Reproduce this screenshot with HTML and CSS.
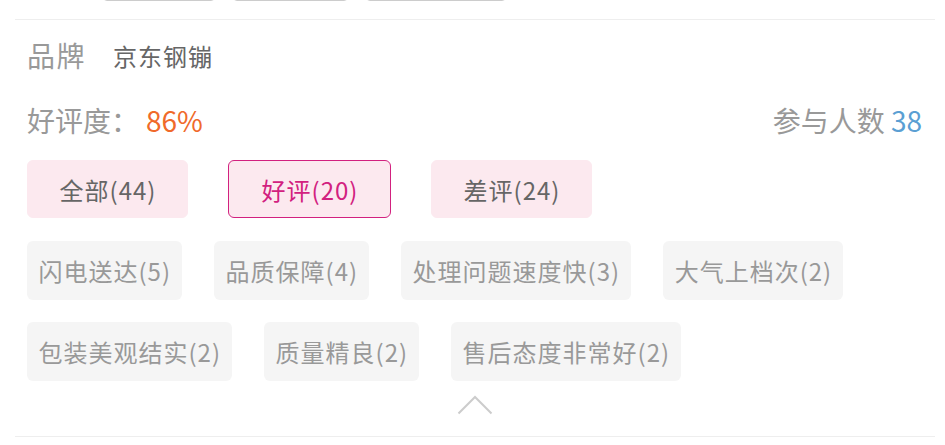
FILE: index.html
```html
<!DOCTYPE html>
<html lang="zh-CN">
<head>
<meta charset="utf-8">
<title>评价</title>
<link rel="stylesheet" href="styles.css">
</head>
<body>
<div class="panel">
  <div class="top-row">
    <span class="top-btn w1"></span>
    <span class="top-btn w2"></span>
    <span class="top-btn w3"></span>
  </div>
  <div class="section">
    <div class="brand-row">
      <span class="brand-label">品牌</span>
      <span class="brand-name">京东钢镚</span>
    </div>
    <div class="rating-row">
      <div class="rating">好评度：<span class="pct">86%</span></div>
      <div class="count">参与人数 <span class="num">38</span></div>
    </div>
    <div class="filters">
      <span class="filter">全部(44)</span>
      <span class="filter active">好评(20)</span>
      <span class="filter">差评(24)</span>
    </div>
    <div class="tags">
      <span class="tag">闪电送达(5)</span>
      <span class="tag">品质保障(4)</span>
      <span class="tag">处理问题速度快(3)</span>
      <span class="tag">大气上档次(2)</span>
      <span class="tag">包装美观结实(2)</span>
      <span class="tag">质量精良(2)</span>
      <span class="tag">售后态度非常好(2)</span>
    </div>
    <div class="toggle">
      <svg width="36" height="20" viewBox="0 0 36 20"><polyline points="1.5,18.5 18,2 34.5,18.5" fill="none" stroke="#cccccc" stroke-width="2"/></svg>
    </div>
  </div>
</div>
</body>
</html>
```
FILE: styles.css
```css
html, body {
  margin: 0;
  padding: 0;
  background: #ffffff;
}
body {
  font-family: "Noto Sans CJK SC", "Noto Sans", sans-serif;
  overflow: hidden;
}
.panel {
  margin: 0 10px 0 15px;
}
.top-row {
  display: flex;
  gap: 18px;
  padding-left: 88px;
  margin-top: -30px;
  margin-bottom: 18px;
}
.top-btn {
  display: block;
  height: 29px;
  border: 1px solid #cccccc;
  border-radius: 4px;
}
.w1 { width: 110px; }
.w2 { width: 113px; }
.w3 { width: 138px; }
.section {
  border-top: 1px solid #eeeeee;
  border-bottom: 1px solid #eeeeee;
  padding: 0 13px 0 12px;
}
.brand-row {
  display: flex;
  align-items: center;
  height: 40px;
  margin-top: 15px;
}
.brand-label {
  font-size: 28px;
  letter-spacing: 1.5px;
  color: #999999;
  width: 86px;
}
.brand-name {
  font-size: 24px;
  letter-spacing: 1px;
  color: #666666;
}
.rating-row {
  display: flex;
  justify-content: space-between;
  align-items: center;
  height: 40px;
  margin-top: 25px;
  font-size: 28px;
  color: #999999;
}
.pct {
  color: #f06a2a;
  margin-left: 7px;
}
.num { color: #5b9fd3; }
.filters {
  display: flex;
  gap: 40px;
  margin-top: 20px;
}
.filter {
  box-sizing: border-box;
  width: 161px;
  height: 58px;
  display: flex;
  align-items: center;
  justify-content: center;
  padding-left: 1px;
  background: #fce9ef;
  border: 1px solid #fce9ef;
  border-radius: 6px;
  font-size: 24px;
  letter-spacing: 1px;
  color: #666666;
}
.filter.active {
  border-color: #d2217f;
  color: #d2217f;
  width: 163px;
}
.tags {
  display: flex;
  flex-wrap: wrap;
  gap: 22px 32px;
  margin-top: 23px;
}
.tag {
  height: 59px;
  display: flex;
  align-items: center;
  padding: 0 11px 0 11.5px;
  background: #f5f5f5;
  border-radius: 6px;
  font-size: 24px;
  letter-spacing: 1px;
  color: #999999;
}
.toggle {
  display: flex;
  justify-content: center;
  padding: 14px 0 21px;
}
.toggle svg { display: block; }
```
